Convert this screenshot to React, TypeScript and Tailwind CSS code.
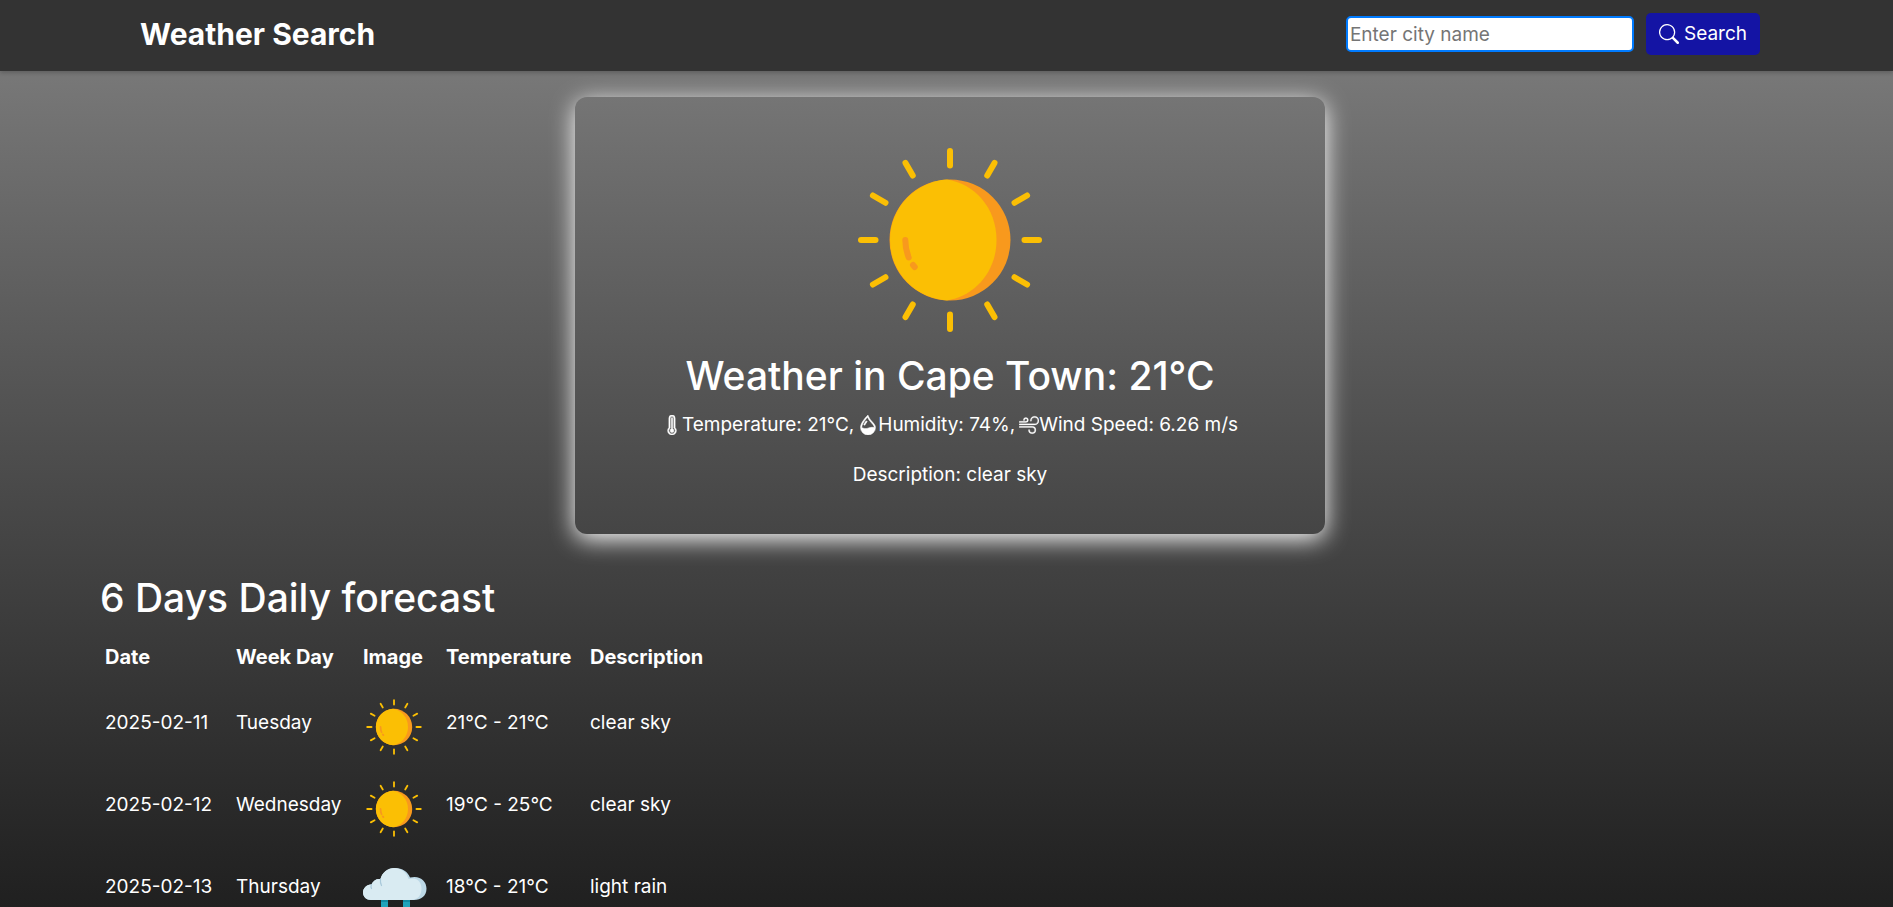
import { useState } from "react";
import { BsSearch, BsThermometerHigh, BsDropletHalf, BsWind } from "react-icons/bs";

const RAYS = [0, 30, 60, 90, 120, 150, 180, 210, 240, 270, 300, 330];

function Sun({ className }: { className: string }) {
  return (
    <svg viewBox="0 0 186 186" className={className} aria-hidden="true">
      <circle cx="93" cy="93" r="60.5" fill="#f8991d" />
      <path d="M90 32.6a60.5 60.5 0 0 0 0 120.8c27-4 49.5-28 49.5-60.4S117 36.6 90 32.6z" fill="#fbbf04" />
      <g stroke="#fbbf04" strokeWidth="6" strokeLinecap="round">
        {RAYS.map((a) => (
          <line key={a} x1="93" y1="4" x2="93" y2="18.5" transform={`rotate(${a} 93 93)`} />
        ))}
      </g>
      <g stroke="#f8991d" strokeWidth="6" strokeLinecap="round" fill="none">
        <path d="M48.3 93q0 9 3.4 17.5" />
        <path d="M56 118l1.7 2" />
      </g>
    </svg>
  );
}

function RainCloud({ className }: { className: string }) {
  return (
    <svg viewBox="0 0 64 64" className={className} aria-hidden="true">
      <g fill="#1fa3bb">
        <rect x="18" y="36" width="7" height="14" rx="3" />
        <rect x="40" y="36" width="7" height="14" rx="3" />
        <rect x="29" y="48" width="7" height="14" rx="3" />
      </g>
      <g fill="#0f8aa3">
        <rect x="18" y="39" width="7" height="4" />
        <rect x="40" y="39" width="7" height="4" />
      </g>
      <path d="M32 9c7.500 0 13 4 15 9.500C57 16 63.500 22 63.500 29.500S58 41 51 41H8c-4.500 0-8-3-8-7.500S4 25 8.500 25.500C10 21.500 13.500 19.500 17.500 20 19 13.500 25 9 32 9z" fill="#bcd8e6" />
      <path d="M31 9c7 0 13 4.500 14.500 11C54 17.500 58.500 23 58.500 29.500S55 41 48 41H8c-4.500 0-8-3-8-7.500S4 25 8.500 25.500C10 21.500 13.500 19.500 17.500 20 19 13.500 25 9 31 9z" fill="#d9ebf2" />
      <path d="M17.500 20q-.5 3.500 1 6.500M8.500 25.500q-1 2 0 4" stroke="#a9c9da" strokeWidth="1.2" strokeLinecap="round" fill="none" />
    </svg>
  );
}

const DAYS = [
  { date: "2025-02-11", day: "Tuesday", icon: "sun", temp: "21°C - 21°C", text: "clear sky" },
  { date: "2025-02-12", day: "Wednesday", icon: "sun", temp: "19°C - 25°C", text: "clear sky" },
  { date: "2025-02-13", day: "Thursday", icon: "rain", temp: "18°C - 21°C", text: "light rain" },
];

export default function App() {
  const [city, setCity] = useState("");
  return (
    <div className="h-screen overflow-hidden bg-linear-to-b from-[#808080] to-[#202020] font-['Inter','Liberation_Sans',sans-serif] text-[19px] leading-[30px] text-white">
      <nav className="flex items-center justify-between bg-[#333] pt-[13px] pr-[133px] pb-4 pl-[140px] shadow-[0_2px_4px_rgba(0,0,0,0.2)]">
        <h1 className="text-[30px] leading-[42px] font-bold">Weather Search</h1>
        <form className="flex items-center gap-3" onSubmit={(e) => e.preventDefault()}>
          <input
            aria-label="City name"
            placeholder="Enter city name"
            value={city}
            onChange={(e) => setCity(e.target.value)}
            className="h-9 w-72 rounded-[5px] border-2 border-[#007bff] bg-white px-0.5 text-black outline-none placeholder:text-[#757575]"
          />
          <button type="submit" className="flex h-[42px] items-center gap-[5px] rounded-[5px] bg-[#1414a4] px-[13px]">
            <BsSearch className="size-5" />
            Search
          </button>
        </form>
      </nav>

      <main className="pt-[26px] pr-[93px] pl-[100px]">
        <section className="mx-auto flex w-[750px] flex-col items-center rounded-xl px-4 pt-[50px] pb-11 shadow-[0_5px_25px_rgba(255,255,255,1)]">
          <Sun className="size-[186px]" />
          <h2 className="mt-[15px] text-[39px] leading-[56px] font-medium">Weather in Cape Town: 21°C</h2>
          <p className="mt-1.5 flex items-center">
            <BsThermometerHigh strokeWidth={0.4} className="size-5" />
            Temperature: 21°C,
            <BsDropletHalf strokeWidth={0.4} className="ml-1 size-5" />
            Humidity: 74%,
            <BsWind strokeWidth={0.2} className="ml-1 size-5" />
            Wind Speed: 6.26 m/s
          </p>
          <p className="mt-5">Description: clear sky</p>
        </section>

        <h2 className="mt-9 text-[39px] leading-[56px] font-medium">6 Days Daily forecast</h2>
        <table className="mt-[5px] table-fixed text-left">
          <thead>
            <tr className="h-[51px] text-[20px]">
              <th scope="col" className="w-[131px] pl-[5px] font-bold">Date</th>
              <th scope="col" className="w-[127px] pl-[5px] font-bold">Week Day</th>
              <th scope="col" className="w-[83px] pl-[5px] font-bold">Image</th>
              <th scope="col" className="w-36 pl-[5px] font-bold">Temperature</th>
              <th scope="col" className="pl-[5px] font-bold">Description</th>
            </tr>
          </thead>
          <tbody>
            {DAYS.map((d) => (
              <tr key={d.date} className="h-[82px]">
                <td className="pl-[5px]">{d.date}</td>
                <td className="pl-[5px]">{d.day}</td>
                <td className="pl-[5px]">
                  {d.icon === "sun" ? <Sun className="mt-2 ml-[3px] size-14" /> : <RainCloud className="mt-2 size-16" />}
                </td>
                <td className="pl-[5px]">{d.temp}</td>
                <td className="pl-[5px]">{d.text}</td>
              </tr>
            ))}
          </tbody>
        </table>
      </main>
    </div>
  );
}
